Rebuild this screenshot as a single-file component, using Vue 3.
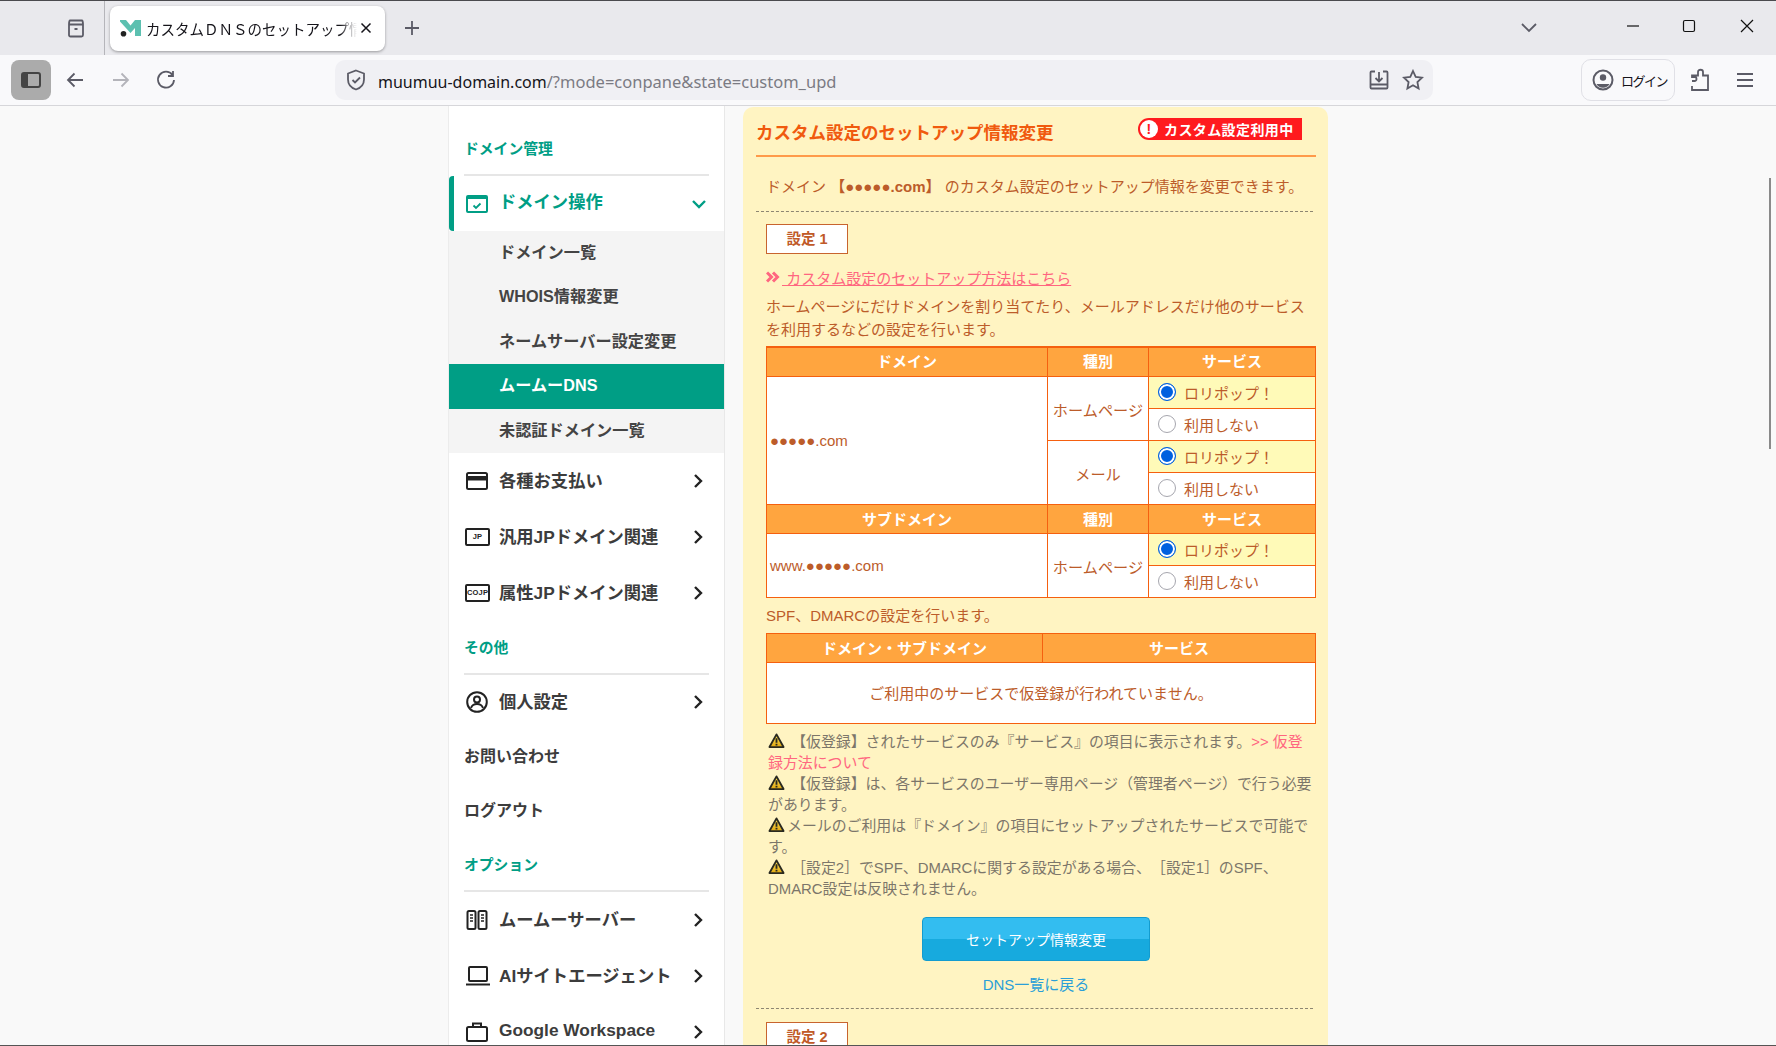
<template>
  <div class="window">
    <!-- browser tab strip -->
    <div class="tabstrip">
      <div class="tab-tools">
        <svg class="ico" width="22" height="22" viewBox="0 0 22 22"><path d="M5 3.500h12M4 7.500h14v10.500a1.500 1.500 0 0 1-1.500 1.500h-11A1.500 1.500 0 0 1 4 18zM4 7.500c0-2 .5-4 1-4M18 7.500c0-2-.5-4-1-4M9.500 12h3" /></svg>
      </div>
      <div class="tab">
        <svg class="favicon" width="21" height="17" viewBox="0 0 21 17">
          <path d="M0 0h6l4.500 5.500L15 0h6v16h-6V8l-4.500 5L0 1.500z" fill="#5cc0b0" />
          <circle cx="3.500" cy="13.800" r="2.800" fill="#222" />
        </svg>
        <span class="tab-title">カスタムＤＮＳのセットアップ情報変更</span>
        <svg class="tab-close" width="12" height="12" viewBox="0 0 12 12"><path d="M1.500 1.500l9 9M10.500 1.500l-9 9" /></svg>
      </div>
      <svg class="ico new-tab" width="18" height="18" viewBox="0 0 18 18"><path d="M9 2v14M2 9h14" /></svg>
      <div class="tabstrip-right">
        <svg class="ico list-tabs" width="18" height="12" viewBox="0 0 18 12"><path d="M2 2l7 7 7-7" /></svg>
        <svg class="win-btn min" width="14" height="14" viewBox="0 0 14 14"><path d="M1 7h12" /></svg>
        <svg class="win-btn max" width="14" height="14" viewBox="0 0 14 14"><rect x="1.500" y="1.500" width="11" height="11" rx="1.500" /></svg>
        <svg class="win-btn cls" width="14" height="14" viewBox="0 0 14 14"><path d="M1 1l12 12M13 1L1 13" /></svg>
      </div>
    </div>

    <!-- address bar row -->
    <div class="toolbar">
      <div class="sidebar-btn">
        <svg width="20" height="16" viewBox="0 0 20 16">
          <rect x="1" y="1" width="18" height="14" rx="2" fill="none" stroke="#444" stroke-width="2" />
          <rect x="1" y="1" width="6" height="14" fill="#444" />
        </svg>
      </div>
      <svg class="ico nav-btn" width="20" height="20" viewBox="0 0 20 20"><path d="M18 10H3M9.500 3.500L3 10l6.500 6.500" /></svg>
      <svg class="ico nav-btn off" width="20" height="20" viewBox="0 0 20 20"><path d="M2 10h15M10.500 3.500L17 10l-6.500 6.500" /></svg>
      <svg class="ico nav-btn" width="20" height="20" viewBox="0 0 20 20"><path d="M16.500 5A8 8 0 1 0 18 10M17 1v5h-5" /></svg>
      <div class="urlbar">
        <svg class="ico shield" width="20" height="22" viewBox="0 0 20 22"><path d="M10 1.500l8 3v6c0 5-3.500 8.500-8 10-4.500-1.500-8-5-8-10v-6zM6.500 11l2.500 2.500L14 8.500" /></svg>
        <span class="url"><span class="url-host">muumuu-domain.com</span>/?mode=conpane&amp;state=custom_upd</span>
        <svg class="ico url-act" width="22" height="22" viewBox="0 0 22 22"><path d="M7 2.500H3.500a1 1 0 0 0-1 1v15a1 1 0 0 0 1 1h15a1 1 0 0 0 1-1v-15a1 1 0 0 0-1-1H15M2.500 15.500h17M11 3v9M7.500 9l3.500 3.500L14.500 9" /></svg>
        <svg class="ico url-act" width="22" height="22" viewBox="0 0 22 22"><path d="M11 2l2.700 5.900 6.300.8-4.600 4.400 1.200 6.400L11 16.300l-5.600 3.200 1.200-6.400L2 8.700l6.300-.8z" /></svg>
      </div>
      <div class="login">
        <svg width="22" height="22" viewBox="0 0 22 22">
          <circle cx="11" cy="11" r="9.500" fill="none" stroke="#5b5b66" stroke-width="2" />
          <circle cx="11" cy="8.500" r="3.200" fill="#5b5b66" />
          <path d="M4.500 15h13a7.500 7.500 0 0 1-13 0z" fill="#5b5b66" />
        </svg>
        <span>ログイン</span>
      </div>
      <svg class="ico ext" width="20" height="24" viewBox="0 0 20 24"><path d="M2 13h3c2 0 2-4 0-4H2V7.500h6V4c0-3 5-3 5 0v3.500h5V22H2v-4" /></svg>
      <svg class="ico burger" width="18" height="16" viewBox="0 0 18 16"><path d="M1 2h16M1 8h16M1 14h16" /></svg>
    </div>

    <div class="page">
      <!-- left navigation -->
      <nav class="side">
        <h3 class="side-head first">ドメイン管理</h3>
        <div class="side-rule" />
        <div class="row open">
          <svg class="row-ico" width="22" height="18" viewBox="0 0 22 18">
            <rect x="1" y="1" width="20" height="16" rx="1" fill="none" stroke="#009e85" stroke-width="2" />
            <rect x="1" y="1" width="20" height="3" fill="#009e85" />
            <path d="M7.500 10.500l2.500 2.500 4.500-4.500" fill="none" stroke="#009e85" stroke-width="1.800" />
          </svg>
          <span class="row-label">ドメイン操作</span>
          <svg class="chev" width="16" height="10" viewBox="0 0 16 10"><path d="M2 2l6 6 6-6" stroke="#009e85" /></svg>
        </div>
        <ul class="sub">
          <li v-for="item in subItems" :key="item" :class="{ on: item === 'ムームーDNS' }">{{ item }}</li>
        </ul>

        <div class="row">
          <svg class="row-ico" width="22" height="18" viewBox="0 0 22 18">
            <rect x="1" y="1" width="20" height="16" rx="1.500" fill="none" stroke="#222" stroke-width="2" />
            <rect x="1" y="4" width="20" height="4.500" fill="#222" />
          </svg>
          <span class="row-label">各種お支払い</span>
          <svg class="chev" width="10" height="16" viewBox="0 0 10 16"><path d="M2 2l6 6-6 6" /></svg>
        </div>
        <div class="row">
          <span class="code-ico">JP</span>
          <span class="row-label">汎用JPドメイン関連</span>
          <svg class="chev" width="10" height="16" viewBox="0 0 10 16"><path d="M2 2l6 6-6 6" /></svg>
        </div>
        <div class="row">
          <span class="code-ico">COJP</span>
          <span class="row-label">属性JPドメイン関連</span>
          <svg class="chev" width="10" height="16" viewBox="0 0 10 16"><path d="M2 2l6 6-6 6" /></svg>
        </div>

        <h3 class="side-head">その他</h3>
        <div class="side-rule" />
        <div class="row person">
          <svg class="row-ico" width="22" height="22" viewBox="0 0 22 22" fill="none" stroke="#222" stroke-width="2">
            <circle cx="11" cy="11" r="9.800" />
            <circle cx="11" cy="8.500" r="3" />
            <path d="M5 17c1-3 3-4 6-4s5 1 6 4" />
          </svg>
          <span class="row-label">個人設定</span>
          <svg class="chev" width="10" height="16" viewBox="0 0 10 16"><path d="M2 2l6 6-6 6" /></svg>
        </div>
        <div class="plain">お問い合わせ</div>
        <div class="plain">ログアウト</div>

        <h3 class="side-head">オプション</h3>
        <div class="side-rule" />
        <div class="row">
          <svg class="row-ico" width="22" height="20" viewBox="0 0 22 20" fill="none" stroke="#222" stroke-width="2">
            <rect x="1.500" y="1" width="8" height="18" rx="1.500" />
            <rect x="12.500" y="1" width="8" height="18" rx="1.500" />
            <path d="M4 5h3M4 8h3M4 11h3M15 5h3M15 8h3M15 11h3" stroke-width="1.500" />
          </svg>
          <span class="row-label">ムームーサーバー</span>
          <svg class="chev" width="10" height="16" viewBox="0 0 10 16"><path d="M2 2l6 6-6 6" /></svg>
        </div>
        <div class="row">
          <svg class="row-ico" width="24" height="20" viewBox="0 0 24 20" fill="none" stroke="#222" stroke-width="2">
            <rect x="3" y="1" width="18" height="14" rx="1" />
            <path d="M0 18.500h24" />
          </svg>
          <span class="row-label">AIサイトエージェント</span>
          <svg class="chev" width="10" height="16" viewBox="0 0 10 16"><path d="M2 2l6 6-6 6" /></svg>
        </div>
        <div class="row">
          <svg class="row-ico" width="22" height="20" viewBox="0 0 22 20" fill="none" stroke="#222" stroke-width="2">
            <rect x="1" y="5" width="20" height="14" rx="1.500" />
            <path d="M7 5V1.500h8V5" />
          </svg>
          <span class="row-label">Google Workspace</span>
          <svg class="chev" width="10" height="16" viewBox="0 0 10 16"><path d="M2 2l6 6-6 6" /></svg>
        </div>
      </nav>

      <!-- main panel -->
      <main class="panel">
        <header class="panel-head">
          <h1>カスタム設定のセットアップ情報変更</h1>
          <div class="badge"><span class="badge-mark">!</span>カスタム設定利用中</div>
        </header>
        <p class="intro">ドメイン <b>【●●●●●.com】</b> のカスタム設定のセットアップ情報を変更できます。</p>
        <div class="dashed" />

        <div class="body">
          <div class="set-box">設定 <b>1</b></div>
          <div class="howto">
            <svg width="14" height="12" viewBox="0 0 14 12"><path d="M1 1.500l4.500 4.500L1 10.500M7 1.500l4.500 4.500L7 10.500" fill="none" stroke="#ff6680" stroke-width="3" /></svg>
            <a>&nbsp;カスタム設定のセットアップ方法はこちら</a>
          </div>
          <p class="lead">ホームページにだけドメインを割り当てたり、メールアドレスだけ他のサービスを利用するなどの設定を行います。</p>

          <table class="grid">
            <colgroup><col class="c1" /><col class="c2" /><col /></colgroup>
            <tbody>
              <tr class="r30"><th>ドメイン</th><th>種別</th><th>サービス</th></tr>
              <tr class="r32">
                <td rowspan="4" class="domain">●●●●●.com</td>
                <td rowspan="2" class="kind">ホームページ</td>
                <td class="svc picked"><label><input type="radio" name="hp" checked />ロリポップ！</label></td>
              </tr>
              <tr class="r32"><td class="svc"><label><input type="radio" name="hp" />利用しない</label></td></tr>
              <tr class="r32">
                <td rowspan="2" class="kind">メール</td>
                <td class="svc picked"><label><input type="radio" name="mail" checked />ロリポップ！</label></td>
              </tr>
              <tr class="r32"><td class="svc"><label><input type="radio" name="mail" />利用しない</label></td></tr>
              <tr class="r29"><th>サブドメイン</th><th>種別</th><th>サービス</th></tr>
              <tr class="r32">
                <td rowspan="2" class="domain">www.●●●●●.com</td>
                <td rowspan="2" class="kind">ホームページ</td>
                <td class="svc picked"><label><input type="radio" name="sub" checked />ロリポップ！</label></td>
              </tr>
              <tr class="r32"><td class="svc"><label><input type="radio" name="sub" />利用しない</label></td></tr>
            </tbody>
          </table>

          <p class="spf">SPF、DMARCの設定を行います。</p>
          <table class="grid second">
            <colgroup><col class="c1b" /><col /></colgroup>
            <tbody>
              <tr class="r29"><th>ドメイン・サブドメイン</th><th>サービス</th></tr>
              <tr class="r61"><td colspan="2" class="none">ご利用中のサービスで仮登録が行われていません。</td></tr>
            </tbody>
          </table>

          <div class="notes">
            <p v-for="(note, i) in notes" :key="i">
              <svg class="warn" width="17" height="15" viewBox="0 0 18 16">
                <defs>
                  <linearGradient :id="`warn-${i}`" x1="0" y1="0" x2="0" y2="1">
                    <stop offset="0" stop-color="#ffe25a" />
                    <stop offset="1" stop-color="#e0a810" />
                  </linearGradient>
                </defs>
                <path d="M9 1.500l7.500 13.500h-15z" :fill="`url(#warn-${i})`" stroke="#2a2a20" stroke-width="2" stroke-linejoin="round" />
                <path d="M9 5.500v5M9 11.500v1.800" stroke="#2a2a20" stroke-width="2" />
              </svg>{{ note.text }}<a v-if="note.link">{{ note.link }}</a>
            </p>
          </div>

          <button class="submit" type="button">セットアップ情報変更</button>
          <a class="back">DNS一覧に戻る</a>
        </div>
        <div class="dashed lower" />
        <div class="body">
          <div class="set-box next">設定 <b>2</b></div>
        </div>
      </main>
    </div>

    <div class="scroll-thumb" />
  </div>
</template>

<script setup>
const subItems = [
  'ドメイン一覧',
  'WHOIS情報変更',
  'ネームサーバー設定変更',
  'ムームーDNS',
  '未認証ドメイン一覧',
];

const notes = [
  { text: ' 【仮登録】されたサービスのみ『サービス』の項目に表示されます。', link: '>> 仮登録方法について' },
  { text: ' 【仮登録】は、各サービスのユーザー専用ページ（管理者ページ）で行う必要があります。' },
  { text: 'メールのご利用は『ドメイン』の項目にセットアップされたサービスで可能です。' },
  { text: ' ［設定2］でSPF、DMARCに関する設定がある場合、［設定1］のSPF、DMARC設定は反映されません。' },
];
</script>

<style>
html,
body {
  margin: 0;
  overflow: hidden;
  background: #f9f9f9;
}
</style>

<style scoped>
.window {
  position: relative;
  display: flex;
  flex-direction: column;
  width: 1776px;
  height: 1046px;
  overflow: hidden;
  background: #f9f9f9;
  border-top: 1px solid #4a4a4e;
  border-bottom: 1px solid #555;
  box-sizing: border-box;
  font-family: 'Liberation Sans', 'Noto Sans CJK JP', sans-serif;
  text-spacing-trim: space-all;
}

.ico {
  fill: none;
  stroke: #5b5b66;
  stroke-width: 1.800;
  flex: none;
}

/* tab strip */
.tabstrip {
  display: flex;
  align-items: center;
  flex: none;
  height: 54px;
  background: #e9e9ed;
}

.tab-tools {
  display: flex;
  align-items: center;
  align-self: stretch;
  width: 105px;
  padding-left: 65px;
  box-sizing: border-box;
  border-right: 1px solid #b5b5ba;
}

.tab {
  display: flex;
  align-items: center;
  width: 275px;
  height: 45px;
  margin-left: 5px;
  padding-left: 10px;
  box-sizing: border-box;
  background: #fff;
  border-radius: 8px;
  box-shadow: 0 1px 3px rgba(0, 0, 0, 0.35);
}

.favicon {
  flex: none;
}

.tab-title {
  width: 211px;
  margin-left: 5px;
  overflow: hidden;
  font-size: 14.500px;
  white-space: nowrap;
  color: #15141a;
  -webkit-mask-image: linear-gradient(to right, #000 92%, transparent);
  mask-image: linear-gradient(to right, #000 92%, transparent);
}

.tab-close {
  flex: none;
  margin-left: 3px;
  fill: none;
  stroke: #15141a;
  stroke-width: 1.500;
}

.new-tab {
  margin-left: 18px;
}

.tabstrip-right {
  display: flex;
  align-items: center;
  margin-left: auto;
}

.list-tabs {
  margin-right: 88px;
}

.win-btn {
  fill: none;
  stroke: #111;
  stroke-width: 1.200;
  margin-bottom: 5px;
}

.win-btn.min {
  margin-right: 42px;
}

.win-btn.max {
  margin-right: 44px;
}

.win-btn.cls {
  margin-right: 22px;
}

/* toolbar */
.toolbar {
  display: flex;
  align-items: center;
  flex: none;
  height: 51px;
  padding-left: 11px;
  box-sizing: border-box;
  background: #f9f9fb;
  border-bottom: 1px solid #d6d6da;
}

.sidebar-btn {
  display: flex;
  align-items: center;
  justify-content: center;
  width: 40px;
  height: 40px;
  background: #ababab;
  border-radius: 8px;
}

.nav-btn {
  margin-left: 14px;
  margin-right: 11.500px;
}

.nav-btn.off {
  stroke: #b4b4ba;
}

.urlbar {
  display: flex;
  align-items: center;
  width: 1098px;
  height: 40px;
  margin-left: 147.500px;
  padding: 0 9px 0 11px;
  box-sizing: border-box;
  background: #f0f0f4;
  border-radius: 10px;
}

.url {
  flex: 1;
  margin-left: 12px;
  padding-top: 2px;
  font-family: 'Noto Sans', sans-serif;
  font-size: 16.500px;
  white-space: nowrap;
  color: #7b7b83;
}

.url-host {
  font-size: 16px;
  color: #15141a;
}

.url-act {
  margin-left: 12px;
}

.login {
  display: flex;
  align-items: center;
  gap: 7px;
  width: 94px;
  height: 42px;
  margin-left: 148px;
  padding-left: 10px;
  box-sizing: border-box;
  font-size: 13px;
  letter-spacing: -1.500px;
  white-space: nowrap;
  color: #15141a;
  border: 1px solid #e0e0e6;
  border-radius: 10px;
}

.ext {
  margin-left: 15px;
}

.burger {
  margin-left: 26px;
}

/* page */
.page {
  display: flex;
  flex: 1;
  justify-content: center;
  min-height: 0;
}

.side {
  flex: none;
  width: 277px;
  box-sizing: border-box;
  background: #fff;
  border-left: 1px solid #ececec;
  border-right: 1px solid #e8e8e8;
}

.side-head {
  margin: 0;
  padding: 17px 0 15px 15px;
  font-size: 14.800px;
  font-weight: 700;
  line-height: 20px;
  color: #009e85;
}

.side-head.first {
  padding: 33px 0 15px 15px;
}

.side-rule {
  height: 2px;
  margin: 0 15px;
  background: #e6e6e6;
}

.row {
  display: grid;
  grid-template-columns: 33px 1fr auto;
  align-items: center;
  height: 56px;
  padding: 0 21px 0 17px;
  box-sizing: border-box;
  font-size: 17.300px;
  font-weight: 700;
  color: #3c3c3c;
}

.row-label {
  padding-bottom: 3px;
  white-space: nowrap;
}

.chev {
  fill: none;
  stroke: #222;
  stroke-width: 2.400;
}

.row.open {
  height: 55px;
  padding: 0 17px 0 12px;
  color: #009e85;
  border-left: 5px solid #009e85;
  border-radius: 4px 0 0 4px;
}

.row.open .row-label {
  padding-bottom: 6px;
}

.row.person {
  height: 55px;
}

.plain {
  height: 54px;
  padding-left: 15px;
  box-sizing: border-box;
  font-size: 16px;
  font-weight: 700;
  line-height: 54px;
  color: #3c3c3c;
}

.code-ico {
  display: flex;
  align-items: center;
  justify-content: center;
  box-sizing: content-box;
  width: 21px;
  height: 14px;
  margin-left: -1px;
  font-size: 7.500px;
  font-weight: 700;
  letter-spacing: 0.2px;
  color: #222;
  border: 2px solid #222;
  border-radius: 2px;
}

.sub {
  margin: 0;
  padding: 0;
  list-style: none;
  background: #f4f4f4;
}

.sub li {
  height: 44.400px;
  padding-left: 50px;
  font-size: 16.200px;
  font-weight: 700;
  line-height: 43.600px;
  color: #444;
}

.sub li.on {
  color: #fff;
  background: #009e85;
}

/* panel */
.panel {
  flex: none;
  width: 585px;
  margin: 1px 0 0 18px;
  padding: 0 12px 0 13px;
  box-sizing: border-box;
  font-size: 15px;
  color: #bc5c2a;
  background: #fff4c2;
  border-radius: 10px 10px 0 0;
}

.panel-head {
  display: flex;
  align-items: center;
  justify-content: space-between;
  height: 50px;
  box-sizing: border-box;
  border-bottom: 2px solid #ff9a4a;
}

.panel-head h1 {
  margin: 0;
  font-size: 17.500px;
  font-weight: 700;
  color: #f05a0e;
}

.badge {
  display: flex;
  align-items: center;
  width: 164px;
  height: 22px;
  margin: 0 14px 4px 0;
  padding-left: 2px;
  box-sizing: border-box;
  font-size: 14px;
  font-weight: 700;
  letter-spacing: 0.4px;
  white-space: nowrap;
  color: #fff;
  background: #ff1a1e;
  border-radius: 11px 0 0 11px;
}

.badge-mark {
  display: flex;
  align-items: center;
  justify-content: center;
  flex: none;
  width: 18px;
  height: 18px;
  margin-right: 6px;
  font-size: 14px;
  color: #ff1a1e;
  background: #fff;
  border-radius: 50%;
}

.intro {
  margin: 0;
  padding: 19px 0 13px 10px;
  font-size: 15px;
  line-height: 22px;
}

.dashed {
  margin-right: 3px;
  border-top: 1px dashed #8d8672;
}

.dashed.lower {
  margin-top: 12px;
}

.body {
  padding-left: 10px;
}

.set-box {
  width: 82px;
  height: 30px;
  margin-top: 12px;
  box-sizing: border-box;
  font-size: 14.500px;
  font-weight: 700;
  line-height: 28px;
  text-align: center;
  color: #c05a28;
  background: #fff;
  border: 1px solid #c8642e;
}

.set-box.next {
  margin-top: 13px;
}

.howto {
  display: flex;
  align-items: center;
  height: 22px;
  margin-top: 12px;
  color: #ff6680;
}

.howto a,
.notes a {
  color: #ff6680;
}

.howto a {
  margin-left: 2px;
  text-decoration: underline;
}

.lead {
  margin: 6.500px 0 0;
  line-height: 23px;
}

.grid {
  width: 100%;
  margin-top: 5px;
  table-layout: fixed;
  border-collapse: collapse;
  border-top: 2px solid #f5600f;
}

.grid.second {
  margin-top: 6px;
  border-top-width: 1px;
}

.grid th,
.grid td {
  padding: 0;
  border: 1px solid #f5600f;
}

.grid th {
  padding-bottom: 2px;
  font-size: 15px;
  font-weight: 700;
  color: #fff;
  background: #ffa53f;
}

.grid td {
  background: #fff;
}

.c1 {
  width: 281px;
}

.c2 {
  width: 101px;
}

.c1b {
  width: 276px;
}

.r30 {
  height: 30px;
}

.r29 {
  height: 29px;
}

.r32 {
  height: 32px;
}

.r61 {
  height: 61px;
}

.grid td.domain {
  padding-left: 3px;
  font-size: 15px;
}

.kind {
  text-align: center;
  font-size: 15.200px;
}

.grid td.picked {
  background: #fffab8;
}

.svc label {
  display: flex;
  align-items: center;
  padding-left: 9px;
}

.svc input {
  flex: none;
  width: 18px;
  height: 18px;
  margin: -2px 8px 0 0;
  box-sizing: border-box;
  appearance: none;
  background: #fff;
  border: 1.500px solid #a6a6ae;
  border-radius: 50%;
}

.svc input:checked {
  background: #0060df;
  border: 1.500px solid #0060df;
  box-shadow: inset 0 0 0 2px #fff;
}

.grid td.none {
  padding-bottom: 2px;
  text-align: center;
}

.spf {
  margin: 7px 0 0;
  line-height: 22px;
}

.notes {
  margin: 8px 0 0 2px;
  font-size: 14.900px;
  line-height: 21px;
  color: #7c766a;
}

.notes p {
  margin: 0;
}

.warn {
  margin-right: 2px;
  vertical-align: -1px;
}

.submit {
  display: block;
  width: 228px;
  height: 44px;
  margin: 17px 0 0 156px;
  padding: 0;
  font: inherit;
  font-size: 14px;
  color: #fff;
  background: linear-gradient(#33bdf0 50%, #17aade 50%);
  border: 1px solid #139ccf;
  border-radius: 4px;
}

.back {
  display: block;
  margin: 13px 0 0 -10px;
  font-size: 15px;
  line-height: 22px;
  text-align: center;
  color: #2a9fd8;
}

.scroll-thumb {
  position: absolute;
  top: 177px;
  right: 5px;
  width: 2px;
  height: 271px;
  background: #8a8a8a;
}
</style>
